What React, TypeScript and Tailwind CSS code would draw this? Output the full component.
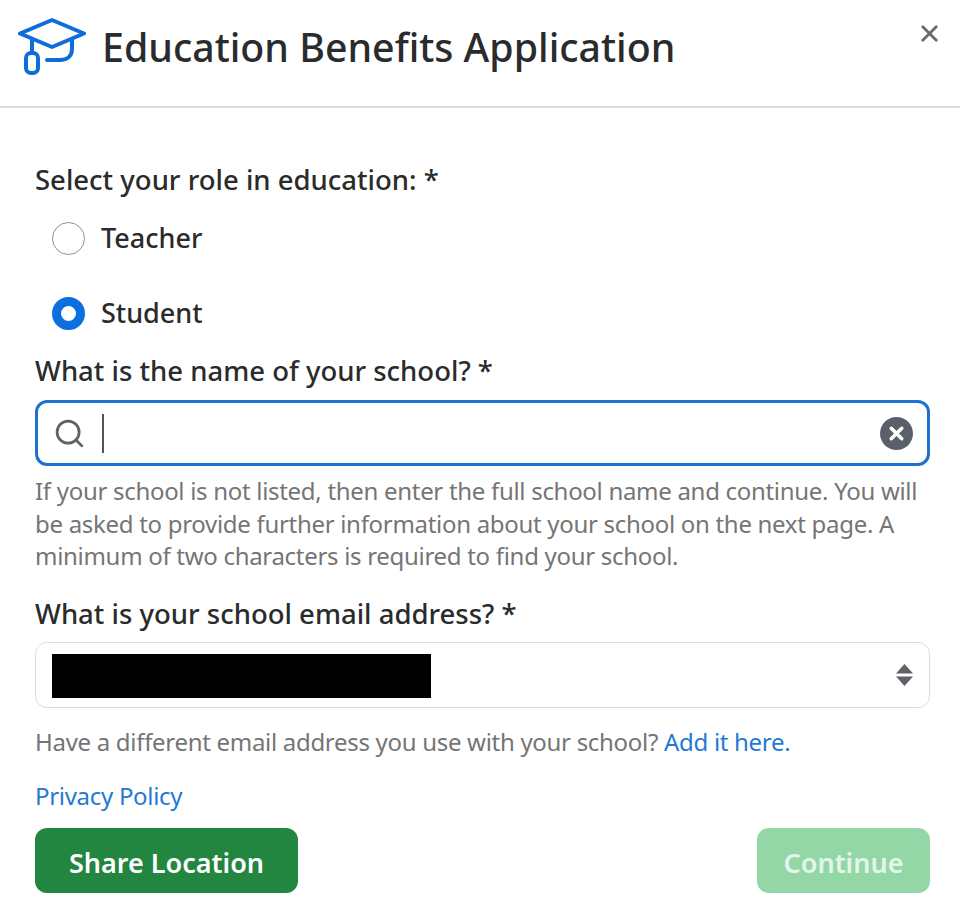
import { Search, X } from 'lucide-react';

const Radio = ({ label, checked }: { label: string; checked?: boolean }) => {
  return (
    <label className="flex items-center h-[34px] pl-[17px]">
      {checked ? (
        <span className="w-[33px] h-[33px] rounded-full border-[9px] border-[#0d6ee0] bg-white" />
      ) : (
        <span className="w-[33px] h-[33px] rounded-full border-[1.500px] border-[#909090] bg-white" />
      )}
      <span className="ml-[16px] text-[27px] font-medium text-[#292b2c] leading-[34px]">{label}</span>
    </label>
  );
};

export default function App() {
  return (
    <div className="w-[960px] h-[904px] bg-white font-['Noto_Sans','Open_Sans',sans-serif] overflow-hidden">
      <header className="relative flex items-center h-[108px] pl-[18px] pb-[14px] border-b-2 border-[#dcdcdc]">
        <svg width="68" height="58" viewBox="18 18 68 58" fill="none" stroke="#0f6cdc" strokeWidth="4" strokeLinejoin="round" strokeLinecap="round">
          <path d="M52 21 84 34.500 52 48 20 34.500z" />
          <path d="M32 41v12" />
          <path d="M72 41v9c0 8-6 11-12 11h-13" />
          <rect x="26" y="54" width="12" height="20" rx="5" />
        </svg>
        <h1 className="ml-[16px] pt-[4px] text-[39.300px] font-medium text-[#292b2c] leading-none">Education Benefits Application</h1>
        <button className="absolute right-[17px] top-[20px] text-[#6a6a6a]">
          <X size={27} strokeWidth={2.5} />
        </button>
      </header>

      <main className="pl-[35px] pr-[30px] pt-[55px]">
        <p className="text-[27.500px] font-medium text-[#292b2c] leading-[34px]">Select your role in education: *</p>
        <div className="flex flex-col gap-[41px] mt-[24px]">
          <Radio label="Teacher" />
          <Radio label="Student" checked />
        </div>

        <p className="mt-[24px] text-[27.500px] font-medium text-[#292b2c] leading-[34px]">What is the name of your school? *</p>
        <div className="flex items-center h-[66px] mt-[12px] pl-[15px] pr-[14px] rounded-[12px] border-[3px] border-[#1f71d0]">
          <Search size={33} strokeWidth={2} className="text-[#5f6368]" />
          <span className="ml-[16px] w-[2px] h-[39px] bg-[#50545a]" />
          <span className="ml-auto flex items-center justify-center w-[33px] h-[33px] rounded-full bg-[#5a6069]">
            <X size={21} strokeWidth={4} className="text-white" />
          </span>
        </div>
        <p className="mt-[9px] text-[24px] tracking-[-0.3px] leading-[32.500px] text-[#757575]">
          If your school is not listed, then enter the full school name and continue. You will be asked to provide further information about your school on the next page. A minimum of two characters is required to find your school.
        </p>

        <p className="mt-[24px] text-[27.500px] font-medium text-[#292b2c] leading-[34px]">What is your school email address? *</p>
        <div className="flex items-center h-[66px] mt-[11px] pl-[16px] pr-[16px] rounded-[12px] border-[1.500px] border-[#dcdcdc]">
          <div className="w-[379px] h-[44px] mt-[3px] bg-black" />
          <svg className="ml-auto" width="17" height="22" viewBox="0 0 17 22" fill="#5f6368">
            <path d="M8.500 0 17 9.500H0z" />
            <path d="M8.500 22 17 12.500H0z" />
          </svg>
        </div>
        <p className="mt-[17px] text-[24px] tracking-[-0.3px] leading-[34px] text-[#757575]">
          Have a different email address you use with your school? <a className="text-[#1f7ad4]">Add it here.</a>
        </p>
        <p className="mt-[20px] text-[24px] tracking-[-0.3px] leading-[34px]">
          <a className="text-[#1f7ad4]">Privacy Policy</a>
        </p>

        <div className="flex justify-between mt-[15px]">
          <button className="w-[263px] h-[65px] pt-[6px] rounded-[12px] bg-[#228540] text-white text-[27px] font-semibold">Share Location</button>
          <button className="w-[173px] h-[65px] pt-[6px] rounded-[12px] bg-[#94d7a6] text-[#e4f5e9] text-[27px] font-semibold">Continue</button>
        </div>
      </main>
    </div>
  );
}
